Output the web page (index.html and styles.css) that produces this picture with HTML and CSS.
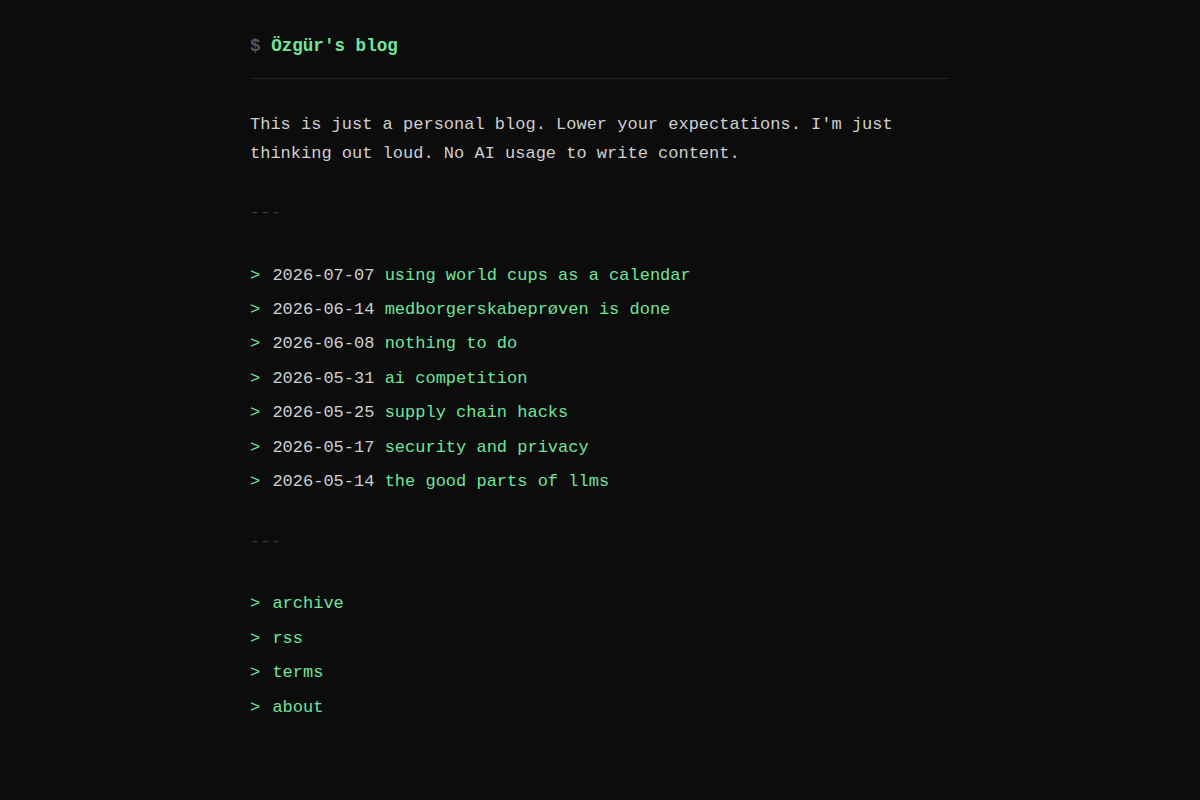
FILE: index.html
```html
<!DOCTYPE html>
<html>
<head>
    <meta charset="utf-8">
    <meta name="viewport" content="width=device-width, initial-scale=1.0">
    <title>Özgür's blog</title>
    <link rel="stylesheet" href="styles.css">
</head>
<body>
    <div class="page">
        <header class="header">
            <span class="prompt">$</span> <a class="title" href="#">Özgür's blog</a>
        </header>

        <p class="intro">This is just a personal blog. Lower your expectations. I'm just thinking out loud. No AI usage to write content.</p>

        <div class="sep">---</div>

        <ul class="posts">
            <li><span class="arrow">&gt;</span> <span class="date">2026-07-07</span> <a href="#">using world cups as a calendar</a></li>
            <li><span class="arrow">&gt;</span> <span class="date">2026-06-14</span> <a href="#">medborgerskabeprøven is done</a></li>
            <li><span class="arrow">&gt;</span> <span class="date">2026-06-08</span> <a href="#">nothing to do</a></li>
            <li><span class="arrow">&gt;</span> <span class="date">2026-05-31</span> <a href="#">ai competition</a></li>
            <li><span class="arrow">&gt;</span> <span class="date">2026-05-25</span> <a href="#">supply chain hacks</a></li>
            <li><span class="arrow">&gt;</span> <span class="date">2026-05-17</span> <a href="#">security and privacy</a></li>
            <li><span class="arrow">&gt;</span> <span class="date">2026-05-14</span> <a href="#">the good parts of llms</a></li>
        </ul>

        <div class="sep">---</div>

        <ul class="posts nav">
            <li><span class="arrow">&gt;</span> <a href="#">archive</a></li>
            <li><span class="arrow">&gt;</span> <a href="#">rss</a></li>
            <li><span class="arrow">&gt;</span> <a href="#">terms</a></li>
            <li><span class="arrow">&gt;</span> <a href="#">about</a></li>
        </ul>
    </div>
</body>
</html>
```

FILE: styles.css
```css
body {
    margin: 0;
    background: #0c0c0c;
    color: #cfcfcf;
    font-family: "Liberation Mono", "DejaVu Sans Mono", monospace;
    font-size: 17px;
    line-height: 1.7;
}
a {
    color: #6ee59a;
    text-decoration: none;
}
.page {
    max-width: 700px;
    margin: 0 auto;
    padding-top: 31px;
}
.header {
    font-size: 17.6px;
    font-weight: bold;
    line-height: 30px;
    padding-bottom: 17px;
    border-bottom: 1px solid #222;
}
.prompt {
    color: #555;
}
.title {
    color: #6ee59a;
}
.intro {
    margin: 32px 0 30px;
    color: #cfcfcf;
}
.sep {
    color: #3a3a3a;
    margin: 28px 0 30px;
}
.posts {
    list-style: none;
    margin: 31px 0 28px;
    padding: 0;
}
.posts li {
    line-height: 34.4px;
}
.arrow {
    color: #6ee59a;
    margin-right: 2px;
}
.date {
    color: #cfcfcf;
}
```
